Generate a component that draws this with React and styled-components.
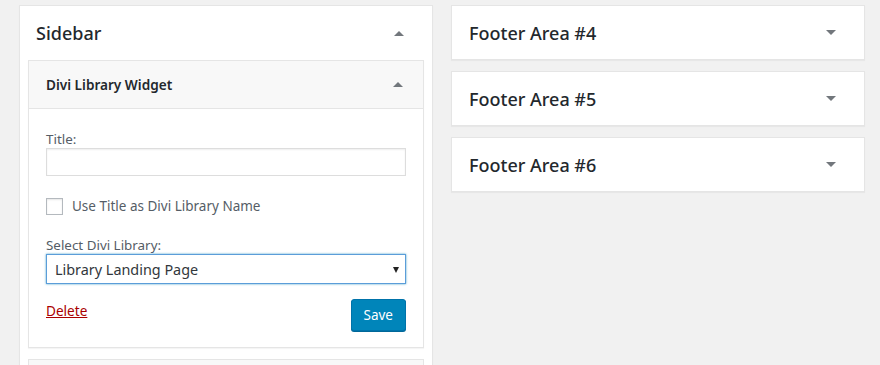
import React, { useState } from 'react';
import styled, { createGlobalStyle } from 'styled-components';

const GlobalStyle = createGlobalStyle`
    body {
        margin: 0;
        background: #f1f1f1;
        font-family: 'Noto Sans', 'Open Sans', sans-serif;
        color: #23282d;
    }
`

export default function App () {

    const [title, setTitle] = useState('');
    const [useTitle, setUseTitle] = useState(false);
    const [library, setLibrary] = useState('landing');

    const footers = ['Footer Area #4', 'Footer Area #5', 'Footer Area #6'];

    return (
        <>
            <GlobalStyle />
            <Page>
                <Column>
                    <SidebarPanel>
                        <PanelHeader>
                            <PanelTitle>Sidebar</PanelTitle>
                            <Arrow up />
                        </PanelHeader>

                        <Widget>
                            <WidgetHeader>
                                <WidgetTitle>Divi Library Widget</WidgetTitle>
                                <Arrow up />
                            </WidgetHeader>

                            <WidgetBody>
                                <Label htmlFor='widget-title'>Title:</Label>
                                <TextInput
                                    id='widget-title'
                                    type='text'
                                    value={title}
                                    onChange={(e) => setTitle(e.target.value)}
                                />

                                <CheckRow>
                                    <Checkbox
                                        type='checkbox'
                                        checked={useTitle}
                                        onChange={(e) => setUseTitle(e.target.checked)}
                                    />
                                    <span>Use Title as Divi Library Name</span>
                                </CheckRow>

                                <Label htmlFor='widget-library' spaced>Select Divi Library:</Label>
                                <SelectWrap>
                                    <Select
                                        id='widget-library'
                                        value={library}
                                        onChange={(e) => setLibrary(e.target.value)}
                                    >
                                        <option value='landing'>Library Landing Page</option>
                                    </Select>
                                    <SelectArrow />
                                </SelectWrap>

                                <Actions>
                                    <DeleteLink href='#'>Delete</DeleteLink>
                                    <SaveButton>Save</SaveButton>
                                </Actions>
                            </WidgetBody>
                        </Widget>

                        <NextWidget />
                    </SidebarPanel>
                </Column>

                <Column>
                    {footers.map((name) => (
                        <FooterPanel key={name}>
                            <PanelTitle>{name}</PanelTitle>
                            <Arrow />
                        </FooterPanel>
                    ))}
                </Column>
            </Page>
        </>
    )
}

const Page = styled.div`
    display: flex;
    gap: 18px;
    padding: 5px 0 0 19px;
    height: 360px;
    overflow: hidden;
`

const Column = styled.div`
    width: 414px;
    display: flex;
    flex-direction: column;
    gap: 11px;
`

const SidebarPanel = styled.div`
    background: #fff;
    border: 1px solid #e5e5e5;
    box-shadow: 0 1px 1px rgba(0, 0, 0, 0.04);
    padding: 0 8px;
    height: 420px;
`

const PanelHeader = styled.div`
    display: flex;
    align-items: center;
    justify-content: space-between;
    height: 54px;
    padding: 0 20px 0 8px;
`

const PanelTitle = styled.h2`
    margin: 0;
    font-size: 18px;
    font-weight: 500;
    color: #23282d;
`

const Arrow = styled.span`
    width: 0;
    height: 0;
    border-left: 5px solid transparent;
    border-right: 5px solid transparent;
    ${(p) => p.up
        ? 'border-bottom: 5px solid #72777c;'
        : 'border-top: 5px solid #72777c;'}
`

const Widget = styled.div`
    border: 1px solid #e5e5e5;
    box-shadow: 0 1px 1px rgba(0, 0, 0, 0.04);
`

const WidgetHeader = styled.div`
    display: flex;
    align-items: center;
    justify-content: space-between;
    height: 47px;
    padding: 0 20px 0 17px;
    background: #f8f8f8;
    border-bottom: 1px solid #e5e5e5;
`

const WidgetTitle = styled.h3`
    margin: 0;
    font-size: 13.6px;
    font-weight: 600;
    color: #23282d;
`

const WidgetBody = styled.div`
    display: flex;
    flex-direction: column;
    padding: 21px 17px 16px;
    background: #fff;
`

const Label = styled.label`
    font-size: 13.4px;
    line-height: 18px;
    color: #555d66;
    margin-top: ${(p) => (p.spaced ? '21px' : '0')};
`

const TextInput = styled.input`
    box-sizing: border-box;
    height: 28px;
    width: 100%;
    border: 1px solid #ddd;
    box-shadow: inset 0 1px 2px rgba(0, 0, 0, 0.07);
    outline: none;
    font-size: 14px;
`

const CheckRow = styled.label`
    display: flex;
    align-items: center;
    gap: 9px;
    margin-top: 21px;
    font-size: 13.5px;
    color: #555d66;
`

const Checkbox = styled.input`
    appearance: none;
    margin: 0;
    width: 17px;
    height: 17px;
    border: 1px solid #b4b9be;
    background: #fff;
    box-shadow: inset 0 1px 2px rgba(0, 0, 0, 0.1);
`

const SelectWrap = styled.div`
    position: relative;
`

const Select = styled.select`
    appearance: none;
    box-sizing: border-box;
    width: 100%;
    height: 30px;
    padding: 0 24px 0 8px;
    border: 1px solid #5b9dd9;
    box-shadow: 0 0 2px rgba(30, 140, 190, 0.8);
    border-radius: 0;
    background: #fff;
    font-family: 'Noto Sans', 'Open Sans', sans-serif;
    font-size: 14.4px;
    color: #32373c;
    outline: none;
`

const SelectArrow = styled.span`
    position: absolute;
    right: 7px;
    top: 13px;
    width: 0;
    height: 0;
    border-left: 3.5px solid transparent;
    border-right: 3.5px solid transparent;
    border-top: 6px solid #222;
    pointer-events: none;
`

const Actions = styled.div`
    display: flex;
    justify-content: space-between;
    align-items: flex-start;
    margin-top: 15px;
`

const DeleteLink = styled.a`
    font-size: 13.6px;
    color: #a00;
    text-decoration: underline;
    margin-top: 2px;
`

const SaveButton = styled.button`
    height: 32px;
    padding: 0 12px;
    background: #0085ba;
    border: 1px solid #0073aa;
    border-radius: 3px;
    box-shadow: 0 1px 0 #006799;
    color: #fff;
    font-family: 'Noto Sans', 'Open Sans', sans-serif;
    font-size: 13.5px;
`

const NextWidget = styled.div`
    margin-top: 11px;
    height: 40px;
    background: #f8f8f8;
    border: 1px solid #e5e5e5;
`

const FooterPanel = styled.div`
    display: flex;
    align-items: center;
    justify-content: space-between;
    height: 53px;
    padding: 0 28px 0 17px;
    background: #fff;
    border: 1px solid #e5e5e5;
    box-shadow: 0 1px 1px rgba(0, 0, 0, 0.04);
`
